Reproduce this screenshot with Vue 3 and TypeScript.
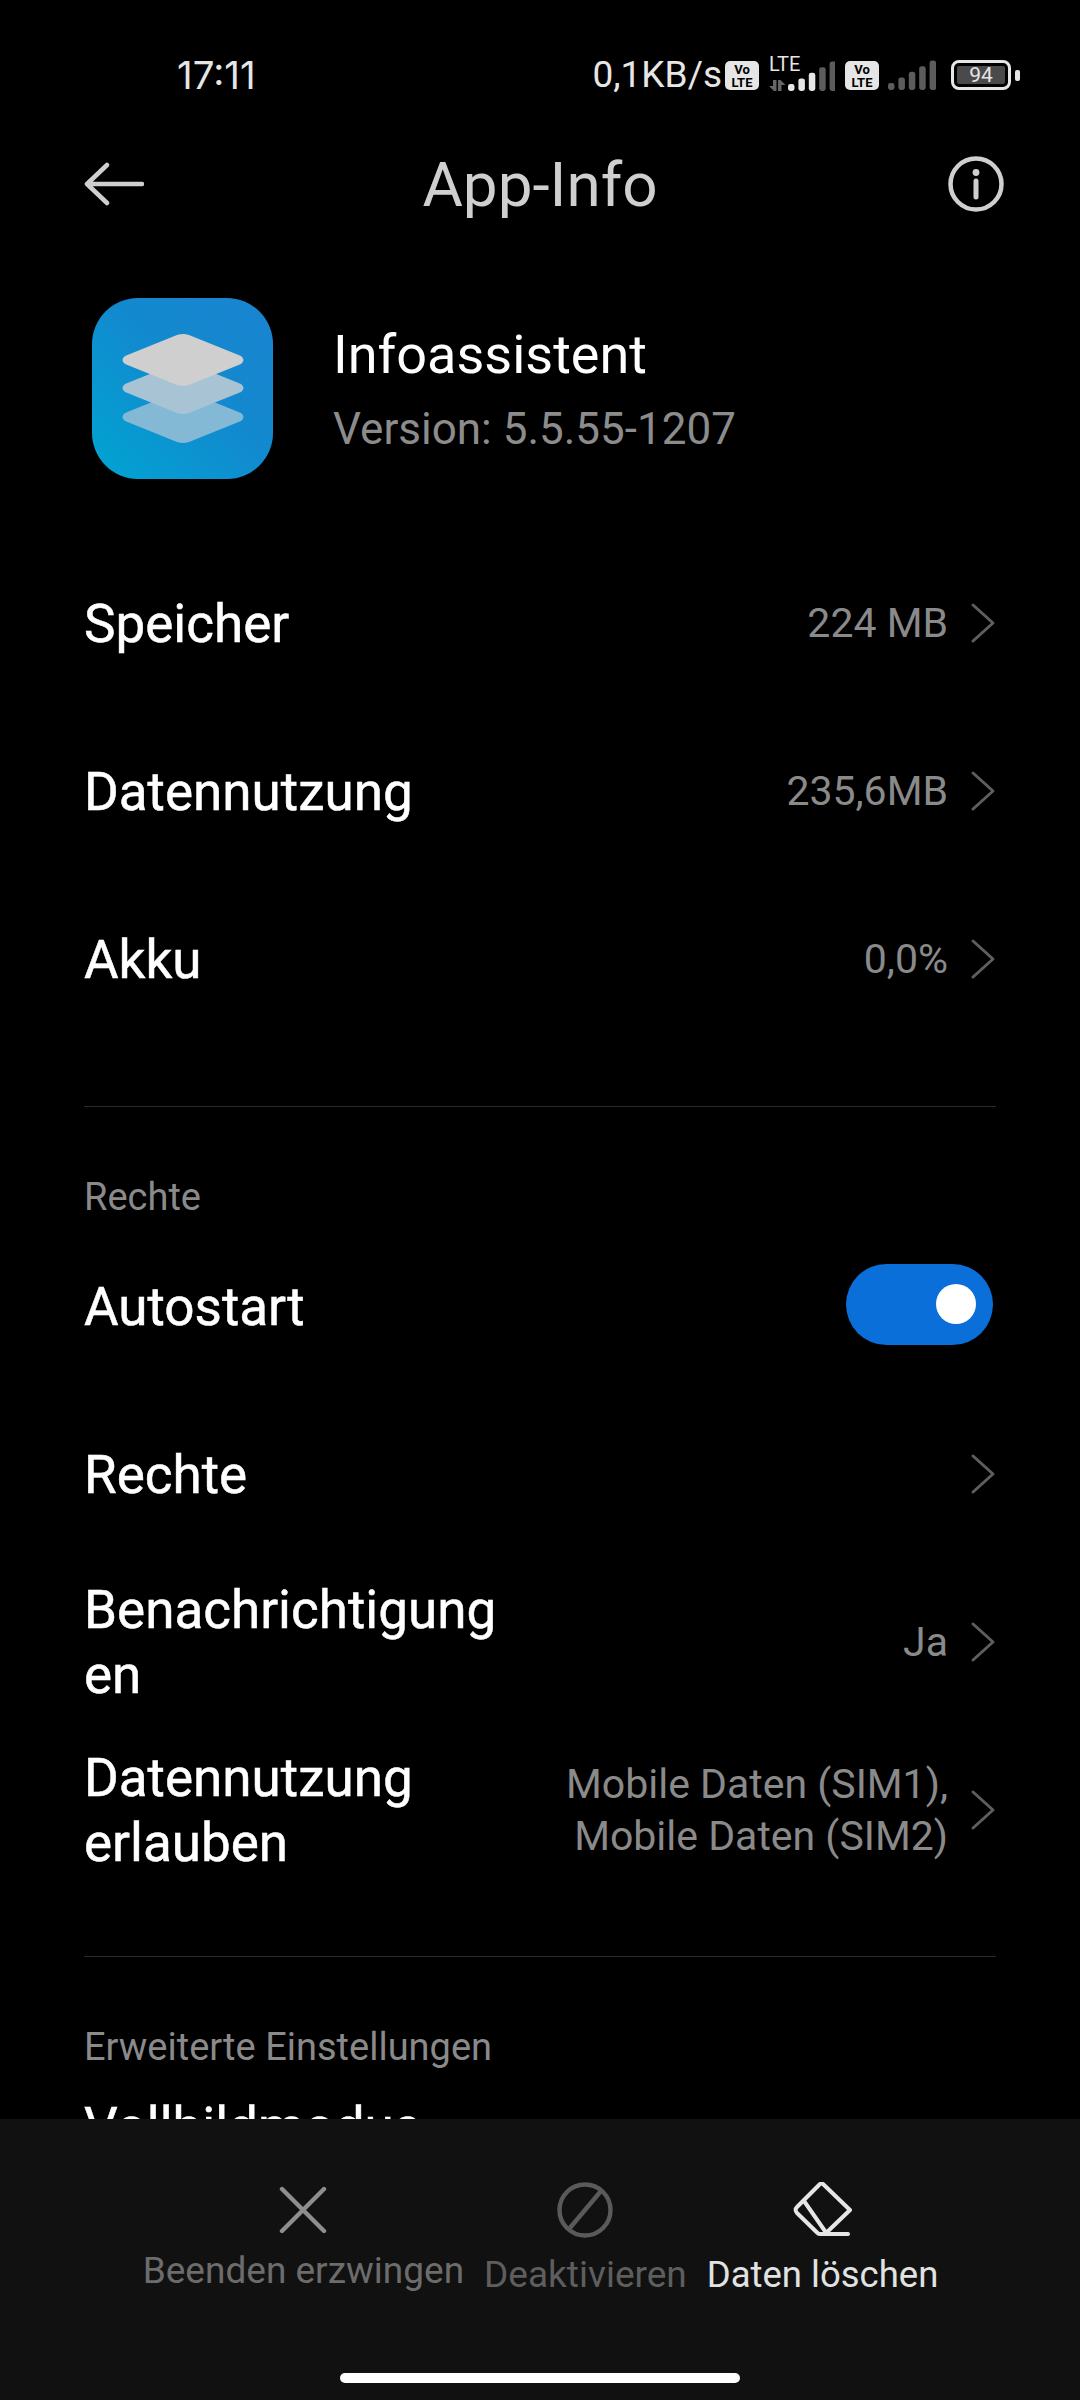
<script setup lang="ts">
interface InfoRow {
  label: string
  value?: string
  chevron?: boolean
  toggle?: boolean
}

const usageRows: InfoRow[] = [
  { label: 'Speicher', value: '224 MB', chevron: true },
  { label: 'Datennutzung', value: '235,6MB', chevron: true },
  { label: 'Akku', value: '0,0%', chevron: true },
]

const rightsRows: InfoRow[] = [
  { label: 'Autostart', toggle: true },
  { label: 'Rechte', chevron: true },
  { label: 'Benachrichtigung\u200Ben', value: 'Ja', chevron: true },
  { label: 'Datennutzung erlauben', value: 'Mobile Daten (SIM1), Mobile Daten (SIM2)', chevron: true },
]

const signalBars = [0, 1, 2, 3, 4]
const diamond = 'M-6-25Q0-27 6-25L58-4Q63 0 58 4L6 25Q0 27-6 25L-58 4Q-63 0-58-4Z'
</script>

<template>
  <div class="screen">
    <div class="status-bar">
      <span class="status-time">17:11</span>
      <div class="status-right">
        <span class="status-speed">0,1KB/s</span>
        <span class="volte"><span>Vo</span><span>LTE</span></span>
        <svg class="signal signal--lte" width="66" height="40" viewBox="0 0 66 40">
          <text x="0" y="19" class="lte-text">LTE</text>
          <path d="M4 28h3.5v11H5l-5-5h4zM9 28h2.5l5 5h-4v6H9z" fill="#666" />
          <rect
            v-for="i in signalBars"
            :key="i"
            :x="19 + i * 10.4"
            :y="32 - i * 5.6"
            width="6.5"
            :height="7 + i * 5.6"
            rx="2.4"
            :fill="i < 3 ? '#e6e6e6' : '#5c5c5c'"
          />
        </svg>
        <span class="volte volte--second"><span>Vo</span><span>LTE</span></span>
        <svg class="signal signal--plain" width="48" height="30" viewBox="0 0 48 30">
          <rect
            v-for="i in signalBars"
            :key="i"
            :x="i * 10.4"
            :y="23 - i * 5.6"
            width="6.5"
            :height="7 + i * 5.6"
            rx="2.4"
            fill="#5c5c5c"
          />
        </svg>
        <span class="battery">
          <span class="battery-fill">94</span>
        </span>
        <span class="battery-tip"></span>
      </div>
    </div>

    <header class="title-bar">
      <svg class="title-back" width="60" height="44" viewBox="0 0 60 44">
        <path d="M23 3 3 22l20 19M4 22h54" fill="none" stroke="#cfcfcf" stroke-width="4.5" stroke-linecap="round" stroke-linejoin="round" />
      </svg>
      <h1 class="title-text">App-Info</h1>
      <svg class="title-info" width="56" height="56" viewBox="0 0 56 56">
        <circle cx="28" cy="28" r="25.5" fill="none" stroke="#cfcfcf" stroke-width="4.5" />
        <circle cx="28" cy="16.5" r="3.4" fill="#cfcfcf" />
        <path d="M28 25v16" stroke="#cfcfcf" stroke-width="5" stroke-linecap="round" />
      </svg>
    </header>

    <main class="content">
      <section class="app-head">
        <div class="app-icon">
          <svg width="181" height="181" viewBox="0 0 181 181">
            <path :d="diamond" transform="translate(91 119)" fill="#84b9d5" />
            <path :d="diamond" transform="translate(91 90)" fill="#a8c4d4" />
            <path :d="diamond" transform="translate(91 62)" fill="#cfcfcf" />
          </svg>
        </div>
        <div class="app-meta">
          <div class="app-name">Infoassistent</div>
          <div class="app-version">Version: 5.5.55-1207</div>
        </div>
      </section>

      <section class="group group--usage">
        <div v-for="row in usageRows" :key="row.label" class="row">
          <span class="row-label">{{ row.label }}</span>
          <span class="row-value">{{ row.value }}</span>
          <svg class="chevron" width="26" height="42" viewBox="0 0 26 42">
            <path d="M3 3l20 18L3 39" fill="none" stroke="#5e5e5e" stroke-width="3" stroke-linecap="round" stroke-linejoin="round" />
          </svg>
        </div>
      </section>

      <div class="divider"></div>

      <div class="section-title section-title--rights">Rechte</div>
      <section class="group">
        <div v-for="row in rightsRows" :key="row.label" class="row">
          <span class="row-label">{{ row.label }}</span>
          <span v-if="row.value" class="row-value">{{ row.value }}</span>
          <span v-if="row.toggle" class="toggle"><span class="toggle-knob"></span></span>
          <svg v-if="row.chevron" class="chevron" width="26" height="42" viewBox="0 0 26 42">
            <path d="M3 3l20 18L3 39" fill="none" stroke="#5e5e5e" stroke-width="3" stroke-linecap="round" stroke-linejoin="round" />
          </svg>
        </div>
      </section>

      <div class="divider divider--second"></div>

      <div class="section-title section-title--advanced">Erweiterte Einstellungen</div>
      <div class="row-label row-label--cut">Vollbildmodus</div>
    </main>

    <footer class="action-bar">
      <div class="actions">
        <button type="button" class="action action--force">
          <svg width="48" height="48" viewBox="0 0 48 48">
            <path d="M3 3l42 42M45 3 3 45" fill="none" stroke="#8e8e8e" stroke-width="4.4" stroke-linecap="round" />
          </svg>
          <span>Beenden erzwingen</span>
        </button>
        <button type="button" class="action action--off">
          <svg width="56" height="56" viewBox="0 0 56 56">
            <circle cx="28" cy="28" r="25.5" fill="none" stroke="#5a5a5a" stroke-width="4.4" />
            <path d="M12 47 44 9" stroke="#5a5a5a" stroke-width="4.4" stroke-linecap="round" />
          </svg>
          <span>Deaktivieren</span>
        </button>
        <button type="button" class="action action--clear">
          <svg width="60" height="56" viewBox="0 0 60 56">
            <path d="M30 2 57 28 32 52H27a4 4 0 0 1-3-1.5L4 31a4 4 0 0 1 0-6L26 3a3 3 0 0 1 4-1z" fill="none" stroke="#e6e6e6" stroke-width="4" stroke-linejoin="round" />
            <path d="M11 19l23 33h21" fill="none" stroke="#e6e6e6" stroke-width="4" stroke-linecap="round" stroke-linejoin="round" />
          </svg>
          <span>Daten löschen</span>
        </button>
      </div>
      <div class="home-bar"></div>
    </footer>
  </div>
</template>

<style scoped>
.screen {
  width: 1080px;
  height: 2400px;
  display: flex;
  flex-direction: column;
  overflow: hidden;
  background: #000;
  color: #fff;
  font-family: Roboto, "Noto Sans", sans-serif;
}
.status-bar {
  height: 128px;
  flex: none;
  display: flex;
  align-items: flex-start;
  justify-content: space-between;
  padding: 53px 60px 0 177px;
  box-sizing: border-box;
}
.status-time {
  font-family: Inter, Roboto, sans-serif;
  font-size: 38.5px;
  line-height: 44px;
  color: #e6e6e6;
}
.status-right {
  display: flex;
  align-items: flex-start;
  height: 44px;
}
.status-speed {
  font-size: 37px;
  line-height: 44px;
  color: #e6e6e6;
}
.volte {
  width: 34px;
  height: 29px;
  margin: 8px 0 0 3px;
  border-radius: 5px;
  background: #e6e6e6;
  color: #000;
  display: flex;
  flex-direction: column;
  align-items: center;
  font-size: 13px;
  font-weight: 700;
  line-height: 13px;
  padding-top: 2px;
  box-sizing: border-box;
}
.volte--second {
  margin-left: 10px;
}
.signal {
  flex: none;
}
.signal--lte {
  margin: -1px 0 0 10px;
}
.signal--plain {
  margin: 7px 0 0 9px;
}
.lte-text {
  font-size: 20px;
  fill: #e6e6e6;
}
.battery {
  width: 60px;
  height: 30px;
  margin: 7px 0 0 15px;
  border: 3px solid #e6e6e6;
  border-radius: 8px;
  box-sizing: border-box;
  padding: 3px;
  display: flex;
}
.battery-fill {
  flex: 1;
  background: #4a4a4a;
  border-radius: 2px;
  font-size: 21px;
  line-height: 18px;
  text-align: center;
  color: #e6e6e6;
}
.battery-tip {
  width: 5px;
  height: 11px;
  margin: 17px 0 0 4px;
  border-radius: 2px;
  background: #e6e6e6;
}
.title-bar {
  flex: none;
  height: 112px;
  padding: 0 76px;
  display: grid;
  grid-template-columns: 1fr auto 1fr;
  align-items: center;
  box-sizing: border-box;
}
.title-back {
  margin-left: 8px;
}
.title-info {
  justify-self: end;
}
.title-text {
  margin: 0;
  font-size: 62px;
  font-weight: 400;
  color: #cfcfcf;
}
.content {
  flex: 1;
  min-height: 0;
  overflow: hidden;
}
.app-head {
  display: flex;
  align-items: center;
  gap: 60px;
  height: 181px;
  padding-left: 92px;
  margin-top: 58px;
}
.app-icon {
  width: 181px;
  height: 181px;
  flex: none;
  border-radius: 46px;
  background: linear-gradient(45deg, #00a5d2 0%, #1289cf 55%, #1a84d0 100%);
}
.app-icon svg {
  display: block;
}
.app-meta {
  display: flex;
  flex-direction: column;
  gap: 19px;
  padding-top: 2px;
}
.app-name {
  font-size: 54px;
  line-height: 60px;
}
.app-version {
  font-size: 44px;
  line-height: 50px;
  color: #8c8c8c;
}
.group {
  padding: 0 84px;
}
.group--usage {
  margin-top: 60px;
}
.row {
  height: 168px;
  display: flex;
  align-items: center;
}
.row-label {
  width: 430px;
  flex: none;
  font-size: 53px;
  line-height: 65px;
  padding-top: 2px;
  color: #fff;
  -webkit-text-stroke: 0.5px #fff;
}
.row-value {
  flex: 1;
  font-size: 41px;
  line-height: 52px;
  color: #8a8a8a;
  text-align: right;
  padding-left: 20px;
}
.chevron {
  margin-left: 22px;
  flex: none;
}
.row .toggle {
  margin: 0 3px 4px auto;
}
.row svg.chevron:nth-child(2) {
  margin-left: auto;
}
.toggle {
  width: 147px;
  height: 81px;
  border-radius: 41px;
  background: #0a6fd9;
  display: flex;
  align-items: center;
  justify-content: flex-end;
  padding-right: 17px;
  box-sizing: border-box;
}
.toggle-knob {
  width: 40px;
  height: 40px;
  border-radius: 50%;
  background: #fff;
}
.divider {
  height: 1px;
  margin: 63px 84px 0;
  background: #2a2a2a;
}
.divider--second {
  margin-top: 62px;
}
.section-title {
  font-size: 38px;
  line-height: 44px;
  padding-left: 84px;
  color: #8a8a8a;
}
.section-title--rights {
  margin-top: 68px;
  margin-bottom: 3px;
}
.section-title--advanced {
  margin-top: 68px;
}
.row-label--cut {
  width: auto;
  padding-left: 84px;
  margin-top: 24px;
}
.action-bar {
  flex: none;
  height: 281px;
  background: #111;
  display: flex;
  flex-direction: column;
  align-items: center;
  position: relative;
}
.actions {
  display: flex;
  align-items: flex-start;
  gap: 20px;
  padding-top: 63px;
  margin-left: 1px;
}
.action {
  border: 0;
  padding: 0;
  background: none;
  font-family: inherit;
  display: flex;
  flex-direction: column;
  align-items: center;
  font-size: 37px;
  line-height: 44px;
}
.action--force {
  color: #6c6c6c;
  gap: 15px;
  padding-top: 4px;
}
.action--off {
  color: #5e5e5e;
  gap: 15px;
}
.action--clear {
  color: #e2e2e2;
  font-size: 36.5px;
  gap: 15px;
}
.home-bar {
  width: 400px;
  height: 10px;
  border-radius: 5px;
  background: #fff;
  position: absolute;
  left: 340px;
  top: 254px;
}
</style>
